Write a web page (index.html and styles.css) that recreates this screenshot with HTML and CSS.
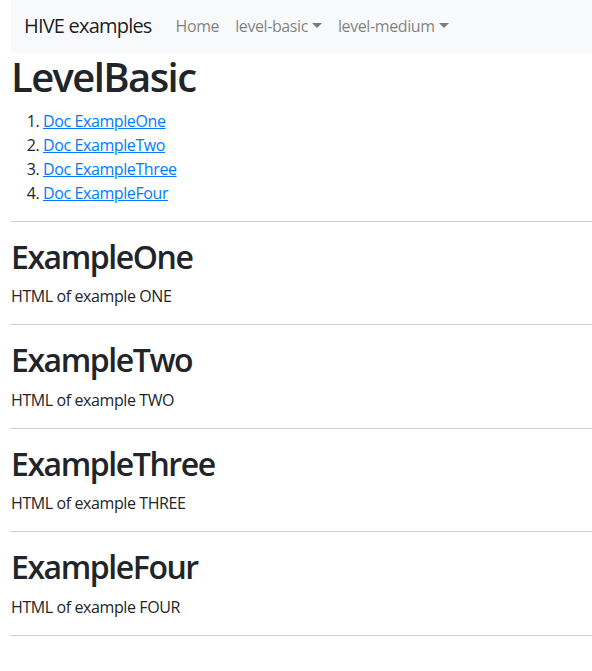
FILE: index.html
```html
<!DOCTYPE html>
<html lang="en">
<head>
<meta charset="utf-8">
<title>HIVE examples</title>
<link rel="stylesheet" href="styles.css">
</head>
<body>
<div class="page">
  <nav class="navbar">
    <a class="brand" href="#">HIVE examples</a>
    <ul class="nav">
      <li><a class="nav-link" href="#">Home</a></li>
      <li><a class="nav-link dropdown" href="#">level-basic</a></li>
      <li><a class="nav-link dropdown" href="#">level-medium</a></li>
    </ul>
  </nav>
  <main class="content">
    <h1>LevelBasic</h1>
    <ol class="doc-list">
      <li><a href="#one">Doc ExampleOne</a></li>
      <li><a href="#two">Doc ExampleTwo</a></li>
      <li><a href="#three">Doc ExampleThree</a></li>
      <li><a href="#four">Doc ExampleFour</a></li>
    </ol>
    <hr>
    <h2 id="one">ExampleOne</h2>
    <p>HTML of example ONE</p>
    <hr>
    <h2 id="two">ExampleTwo</h2>
    <p>HTML of example TWO</p>
    <hr>
    <h2 id="three">ExampleThree</h2>
    <p>HTML of example THREE</p>
    <hr>
    <h2 id="four">ExampleFour</h2>
    <p>HTML of example FOUR</p>
    <hr>
  </main>
</div>
</body>
</html>
```
FILE: styles.css
```css
html, body {
  margin: 0;
  padding: 0;
  background: #fff;
}
body {
  font-family: "Open Sans", "Noto Sans", sans-serif;
  font-size: 16px;
  line-height: 1.5;
  color: #212529;
  letter-spacing: -0.025em;
}
.page {
  padding-left: 11px;
}
.navbar {
  display: flex;
  align-items: center;
  height: 51px;
  padding: 0 13px 2px;
  background: #f8f9fa;
}
.brand {
  font-size: 20px;
  color: rgba(0, 0, 0, 0.9);
  text-decoration: none;
  margin-right: 16px;
  letter-spacing: -0.04em;
}
.nav {
  display: flex;
  list-style: none;
  margin: 0;
  padding: 0;
}
.nav-link {
  display: block;
  padding: 0 8px;
  color: rgba(0, 0, 0, 0.5);
  text-decoration: none;
}
.dropdown::after {
  content: "";
  display: inline-block;
  margin-left: 4px;
  vertical-align: 4px;
  border-top: 5px solid;
  border-left: 5px solid transparent;
  border-right: 5px solid transparent;
}
h1 {
  font-size: 40px;
  font-weight: 600;
  line-height: 1.2;
  margin: 0 0 8px;
  letter-spacing: -0.04em;
}
h2 {
  font-size: 32px;
  font-weight: 600;
  line-height: 1.2;
  margin: 0 0 8px;
  letter-spacing: -0.045em;
}
p {
  margin: 0 0 16px;
}
.doc-list {
  margin: 0 0 16px;
  padding-left: 32px;
}
.doc-list a {
  color: #007bff;
  text-decoration: underline;
}
hr {
  margin: 16px 0;
  border: 0;
  border-top: 1px solid #cccccc;
  height: 0;
}
```
